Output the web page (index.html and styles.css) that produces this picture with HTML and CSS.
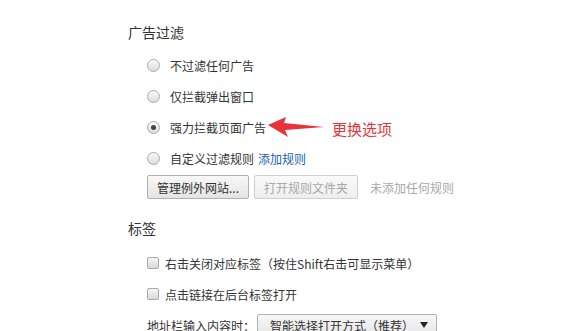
FILE: index.html
```html
<!DOCTYPE html>
<html lang="zh-CN">
<head>
<meta charset="utf-8">
<link rel="stylesheet" href="styles.css">
</head>
<body>
<div class="page">
  <section class="section">
    <h2 class="heading">广告过滤</h2>
    <div class="options">
      <label class="row"><span class="radio"></span><span>不过滤任何广告</span></label>
      <label class="row"><span class="radio"></span><span>仅拦截弹出窗口</span></label>
      <label class="row"><span class="radio checked"></span><span>强力拦截页面广告</span></label>
      <label class="row"><span class="radio"></span><span>自定义过滤规则</span><a class="link">添加规则</a></label>
      <div class="btn-row">
        <span class="btn">管理例外网站...</span>
        <span class="btn disabled">打开规则文件夹</span>
        <span class="muted">未添加任何规则</span>
      </div>
    </div>
  </section>
  <section class="section">
    <h2 class="heading">标签</h2>
    <div class="options">
      <label class="row"><span class="checkbox"></span><span>右击关闭对应标签（按住Shift右击可显示菜单）</span></label>
      <label class="row"><span class="checkbox"></span><span>点击链接在后台标签打开</span></label>
      <div class="row">
        <span>地址栏输入内容时：</span>
        <span class="select">智能选择打开方式（推荐）<span class="caret"></span></span>
      </div>
    </div>
  </section>
  <div class="annotation">
    <svg class="arrow" width="60" height="24" viewBox="0 0 60 24">
      <polygon points="0,8 18,0 16,6 56,10 17,13 20,20" fill="#e8333a"/>
    </svg>
    <span class="note">更换选项</span>
  </div>
</div>
</body>
</html>
```

FILE: styles.css
```css
html, body {
  margin: 0;
  padding: 0;
  background: #ffffff;
}
body {
  font-family: "Noto Sans CJK SC", "Noto Sans", sans-serif;
  font-size: 12px;
  color: #333333;
}
.page {
  position: relative;
  padding: 22px 0 0 128px;
}
.section {
  margin: 0;
}
.heading {
  margin: 0;
  font-size: 14px;
  font-weight: normal;
  line-height: 20px;
  color: #333;
}
.options {
  padding: 13px 0 0 19px;
}
.row {
  display: flex;
  align-items: center;
  height: 20px;
  margin-bottom: 11px;
}
.radio {
  width: 13px;
  height: 13px;
  border-radius: 50%;
  border: 1px solid #a9a9a9;
  background: linear-gradient(#fafafa, #dcdcdc);
  box-sizing: border-box;
  margin-right: 10px;
  position: relative;
  flex: none;
}
.radio.checked::after {
  content: "";
  position: absolute;
  left: 3px;
  top: 3px;
  width: 5px;
  height: 5px;
  border-radius: 50%;
  background: #444;
}
.checkbox {
  width: 12px;
  height: 12px;
  border: 1px solid #a9a9a9;
  border-radius: 2px;
  background: linear-gradient(#f6f6f6, #d8d8d8);
  box-sizing: border-box;
  margin-right: 6px;
  flex: none;
}
.link {
  color: #1a5fb4;
  margin-left: 4px;
}
.btn-row {
  display: flex;
  align-items: center;
  margin: -4px 0 0 0;
  height: 24px;
}
.btn {
  display: inline-flex;
  align-items: center;
  height: 24px;
  padding: 0 9px;
  box-sizing: border-box;
  border: 1px solid #b0b0b0;
  border-radius: 2px;
  background: linear-gradient(#f8f8f8, #e4e4e4);
  color: #333;
  margin-right: 5px;
}
.btn.disabled {
  color: #a8a8a8;
  border-color: #cfcfcf;
  background: linear-gradient(#fafafa, #eeeeee);
}
.muted {
  color: #a8a8a8;
  margin-left: 7px;
}
.section + .section {
  margin-top: 19px;
}
.section + .section .options {
  padding-top: 15px;
}
.select {
  display: inline-flex;
  align-items: center;
  height: 22px;
  padding: 0 8px 0 12px;
  margin-left: 2px;
  border: 1px solid #b0b0b0;
  border-radius: 2px;
  background: linear-gradient(#f8f8f8, #e6e6e6);
  box-sizing: border-box;
  width: 180px;
  justify-content: space-between;
}
.caret {
  width: 0;
  height: 0;
  border-left: 4px solid transparent;
  border-right: 4px solid transparent;
  border-top: 6px solid #222;
}
.annotation {
  position: absolute;
  left: 268px;
  top: 117px;
  display: flex;
  align-items: center;
}
.arrow {
  display: block;
}
.note {
  color: #e8333a;
  font-size: 15px;
  margin-left: 4px;
  line-height: 24px;
}
```
